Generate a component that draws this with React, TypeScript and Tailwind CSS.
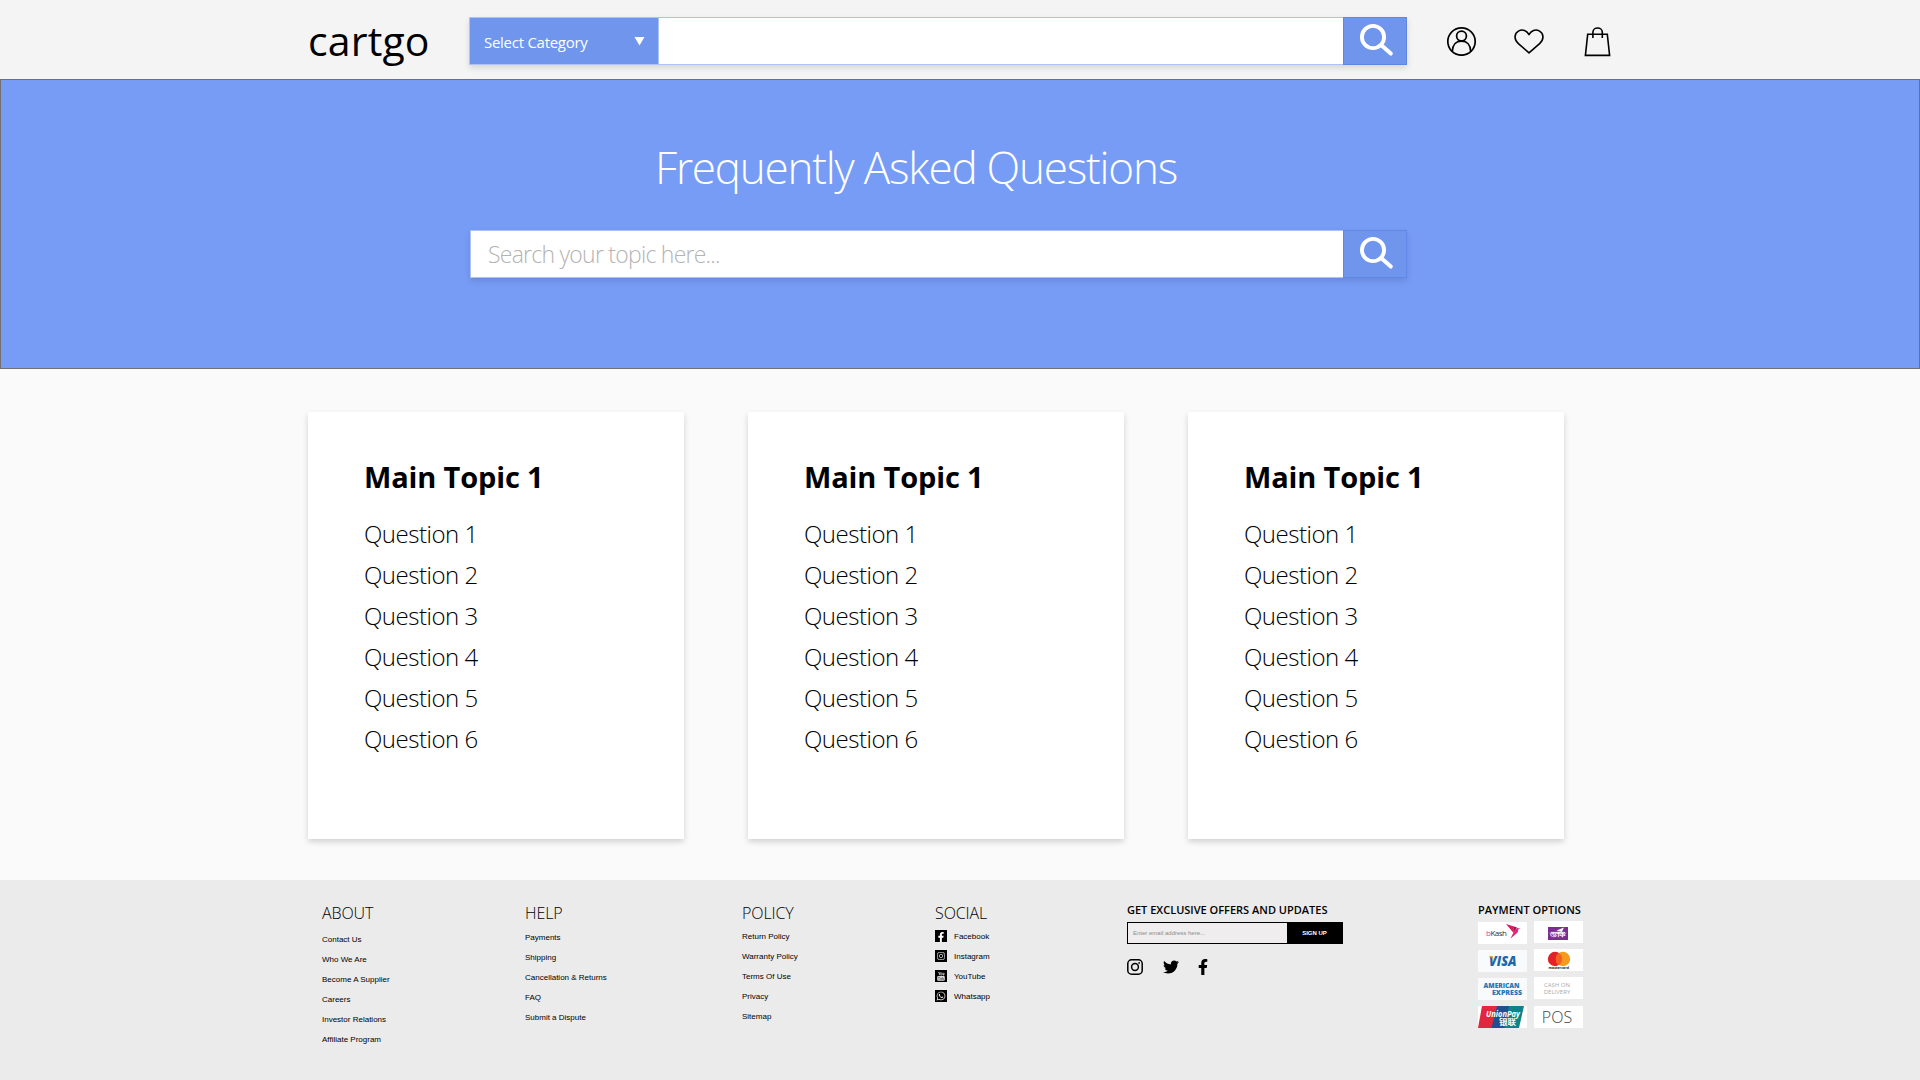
import type { ReactNode } from "react";
import { FaFacebookF, FaTwitter, FaWhatsapp } from "react-icons/fa";

function SearchGlyph() {
  return (
    <svg width="36" height="36" viewBox="0 0 36 36" fill="none" stroke="#fff" strokeLinecap="round">
      <circle cx="15" cy="15" r="11.1" strokeWidth="3.9" />
      <path d="M23.4 23.2 L32.8 31.6" strokeWidth="4" />
    </svg>
  );
}

function UserIcon() {
  return (
    <svg width="30" height="30" viewBox="0 0 30 30" fill="none" stroke="#000" strokeWidth="1.7">
      <circle cx="15.5" cy="15.5" r="13.7" />
      <circle cx="15.5" cy="10.1" r="4.9" />
      <path d="M6.3 25.3 C6.5 19.1 10.1 15.1 15.5 15.1 C20.9 15.1 24.5 19.1 24.7 25.3" />
    </svg>
  );
}

function HeartIcon() {
  return (
    <svg width="30" height="25" viewBox="0 0 30 25" fill="none" stroke="#000" strokeWidth="1.6" strokeLinejoin="round">
      <path d="M15 23.8 L4.4 14.6 C-0.4 10.3 0.3 4.4 4.4 2.1 C8.6 -0.2 13 1.6 15 5.6 C17 1.6 21.4 -0.2 25.6 2.1 C29.7 4.4 30.4 10.3 25.6 14.6 Z" />
    </svg>
  );
}

function BagIcon() {
  return (
    <svg width="27" height="30" viewBox="0 0 27 30" fill="none" stroke="#000" strokeWidth="1.6">
      <path d="M3.7 7.2 H23.3 L25.6 28.4 H1.4 Z" />
      <path d="M8.9 11.1 V5.3 C8.9 -0.4 18.3 -0.4 18.3 5.3 V11.1" />
    </svg>
  );
}

function InstagramGlyph({ size, color }: { size: number; color: string }) {
  return (
    <svg width={size} height={size} viewBox="0 0 16 16" fill="none" stroke={color} strokeWidth="1.5">
      <rect x="0.8" y="0.8" width="14.4" height="14.4" rx="3.8" />
      <circle cx="8" cy="8" r="3.4" />
      <circle cx="12.1" cy="3.9" r="0.9" fill={color} stroke="none" />
    </svg>
  );
}

function YouTubeStacked() {
  return (
    <svg width="8" height="9" viewBox="0 0 8 9" fill="none" stroke="#ddd" strokeWidth="0.8">
      <path d="M1.5 0 L2.4 1.6 L3.3 0 M2.4 1.6 V3.2" />
      <rect x="3.9" y="1.1" width="0.9" height="1.8" />
      <path d="M6 0.8 V3 H7 V0.8" />
      <rect x="0.2" y="4" width="7.6" height="4.8" rx="1" fill="#ddd" stroke="none" />
      <path d="M1.2 5.3 H2.8 M2 5.3 V7.8 M3.6 5.8 V7.5 H4.5 V5.8 M5.6 5 V7.6 H6.6 V6" stroke="#333" strokeWidth="0.5" />
    </svg>
  );
}

function Header() {
  return (
    <header className="flex h-[79px] items-start bg-[#f4f4f4] pl-[308px]">
      <div className="w-[161px] pt-[10px] text-[41px] leading-[60px] tracking-[0.15px]">cartgo</div>
      <div className="mt-[17px] flex h-12 w-[938px] shadow-[0_3px_6px_rgba(0,0,0,0.12)]">
        <div className="flex w-[190px] items-start justify-between border border-[#adc3f3] bg-[#6f95ed] pl-[14px] pr-[13px] text-white">
          <span className="pt-[9px] text-[15px] leading-[30px] tracking-[-0.27px]">Select Category</span>
          <svg className="mt-[19px]" width="11" height="9" viewBox="0 0 11 9" fill="#fff">
            <path d="M0.5 0 H10.5 L5.5 8.5 Z" />
          </svg>
        </div>
        <div className="grow border-y border-[#adc3f3] bg-white" />
        <div className="w-16 border border-[#5f86e0] bg-[#6f95ed] pl-[14px] pt-1">
          <SearchGlyph />
        </div>
      </div>
      <div className="flex">
        <div className="ml-[39px] mt-[26px] w-[30px]"><UserIcon /></div>
        <div className="ml-[38px] mt-[29px] w-[30px]"><HeartIcon /></div>
        <div className="ml-[40px] mt-[27px] w-[27px]"><BagIcon /></div>
      </div>
    </header>
  );
}

function Hero() {
  return (
    <section className="h-[290px] border border-[#707070] bg-[#779cf6] pl-[469px]">
      <h1 className="ml-[185px] pt-[57px] text-[44px] font-light leading-[60px] tracking-[-1.2px] text-white">
        Frequently Asked Questions
      </h1>
      <div className="mt-[33px] flex h-12 w-[937px] shadow-[0_3px_6px_rgba(0,0,0,0.12)]">
        <div className="grow border border-r-0 border-[#adc3f3] bg-white pl-[17px] pt-[7px] text-[23px] font-light leading-[32px] tracking-[-0.75px] text-[#b4b4b4]">
          Search your topic here...
        </div>
        <div className="w-16 border border-[#6088e6] bg-[#6f95ed] pl-[14px] pt-1">
          <SearchGlyph />
        </div>
      </div>
    </section>
  );
}

function TopicCard() {
  return (
    <article className="h-[427px] w-[376px] bg-white pl-[56px] pt-[45px] shadow-[0_3px_6px_rgba(0,0,0,0.16)]">
      <h2 className="text-[29px] font-bold leading-[40px] tracking-[-0.15px]">Main Topic 1</h2>
      <ul className="mt-[16px] text-[24px] font-light leading-[41px] tracking-[-0.47px]">
        {[1, 2, 3, 4, 5, 6].map((n) => (
          <li key={n}>Question {n}</li>
        ))}
      </ul>
    </article>
  );
}

function Column({ title, width, gap, children }: { title: string; width: string; gap: string; children: ReactNode }) {
  return (
    <div className={`${width} pt-px`}>
      <h3 className="text-[16px] font-light leading-5 tracking-[-0.1px]">{title}</h3>
      <ul className={`${gap} font-['Liberation_Sans',sans-serif] text-[8px] leading-5`}>{children}</ul>
    </div>
  );
}

const links = (names: string[]) => names.map((n) => <li key={n}>{n}</li>);

const socials: { name: string; icon: ReactNode; align: string }[] = [
  { name: "Facebook", icon: <FaFacebookF size={10} color="#fff" />, align: "items-end justify-end pr-px" },
  { name: "Instagram", icon: <InstagramGlyph size={8} color="#ddd" />, align: "items-center justify-center" },
  { name: "YouTube", icon: <YouTubeStacked />, align: "items-center justify-center" },
  { name: "Whatsapp", icon: <FaWhatsapp size={10} color="#e5e5e5" />, align: "items-center justify-center" },
];

function Newsletter() {
  return (
    <div className="w-[351px]">
      <h3 className="whitespace-nowrap text-[11px] font-semibold leading-4">GET EXCLUSIVE OFFERS AND UPDATES</h3>
      <div className="mt-1 flex h-[22px] w-[216px] border border-black font-['Liberation_Sans',sans-serif] text-[6px] leading-5">
        <span className="w-[159px] bg-[#efeded] pl-[5px] text-[#8c8c8c]">Enter email address here...</span>
        <span className="grow bg-black text-center font-bold text-white">SIGN UP</span>
      </div>
      <div className="mt-[15px] flex h-4 items-center">
        <InstagramGlyph size={16} color="#000" />
        <FaTwitter className="ml-5" size={16} />
        <FaFacebookF className="ml-4" size={16} />
      </div>
    </div>
  );
}

function Payments() {
  return (
    <div className="w-[106px]">
      <h3 className="whitespace-nowrap text-[11px] font-semibold leading-4">PAYMENT OPTIONS</h3>
      <div className="flex gap-[7px]">
        <div className="flex w-[49px] flex-col gap-[6px] pt-1">
          <div className="flex h-[22px] items-center bg-white pl-2">
            <span className="text-[8px] leading-[12px] tracking-[-0.5px] text-[#333]"><b className="font-normal text-[#e0409a]">b</b>Kash</span>
            <svg className="-mt-1" width="15" height="15" viewBox="0 0 15 15">
              <path d="M0 0 L8 2.4 L7.6 9 Z" fill="#d81b60" />
              <path d="M8 2.4 L11 3.5 L7.6 9 Z" fill="#a3154d" />
              <path d="M11 4 L14.8 4.6 L12.6 5 L11.6 8.4 L4.4 14.8 L7.6 8.2 Z" fill="#e2267a" />
            </svg>
          </div>
          <div className="h-[22px] bg-[#f8fafb]">
            <svg width="49" height="22" viewBox="0 0 49 22">
              <text x="11" y="15.9" textLength="27.5" lengthAdjust="spacingAndGlyphs" fontFamily="Open Sans" fontSize="13.5" fontWeight="800" fontStyle="italic" fill="#1a67a9">VISA</text>
              <path d="M10.3 6 H14.6 L16 10.5 C14.6 8 13 6.8 10.3 6 Z" fill="#f0a930" />
            </svg>
          </div>
          <div className="h-[22px] bg-[#f8fafb]">
            <svg width="49" height="22" viewBox="0 0 49 22" fill="#2178b5" fontFamily="Open Sans" fontSize="7" fontWeight="800">
              <text x="5.5" y="9.8" textLength="36" lengthAdjust="spacingAndGlyphs">AMERICAN</text>
              <text x="14" y="17.2" textLength="30" lengthAdjust="spacingAndGlyphs">EXPRESS</text>
            </svg>
          </div>
          <div className="h-[22px] bg-white">
            <svg width="49" height="22" viewBox="0 0 49 22">
              <path d="M4 0 H20 L15 22 H0 Z" fill="#e0273f" />
              <path d="M19 0 H33 L28 22 H13.5 Z" fill="#1f4f8f" />
              <path d="M31 0 H46 L41 22 H26 Z" fill="#0d8288" />
              <g fill="#fff" fontWeight="700">
                <text x="8" y="11" textLength="34" lengthAdjust="spacingAndGlyphs" fontFamily="Open Sans" fontStyle="italic" fontSize="9">UnionPay</text>
                <text x="21" y="18.6" textLength="17" lengthAdjust="spacingAndGlyphs" fontFamily="Noto Sans CJK SC" fontSize="7.5">银联</text>
              </g>
            </svg>
          </div>
        </div>
        <div className="flex w-[49px] flex-col pt-[3px]">
          <div className="h-[22px] bg-white">
            <svg width="49" height="22" viewBox="0 0 49 22">
              <rect x="14" y="6" width="20" height="13" fill="#7b2d90" />
              <path d="M22.5 9.6 L30 6.4 L27.8 11 Z" fill="#fff" />
              <path d="M17 11.4 H31" stroke="#fff" strokeWidth="0.9" />
              <text x="16" y="16.2" textLength="16" lengthAdjust="spacingAndGlyphs" fontFamily="Open Sans" fontSize="6.5" fontWeight="700" fill="#fff">ডাক</text>
            </svg>
          </div>
          <div className="mt-[6px] flex h-[22px] justify-center bg-white">
            <svg width="24" height="22" viewBox="0 0 24 22">
              <circle cx="8" cy="10" r="7.2" fill="#e02425" />
              <circle cx="16" cy="10" r="7.2" fill="#f49a1c" />
              <path d="M12 4 A7.2 7.2 0 0 1 12 16 A7.2 7.2 0 0 1 12 4 Z" fill="#f2611f" />
              <text x="1.5" y="20.4" textLength="20.5" lengthAdjust="spacingAndGlyphs" fontFamily="Open Sans" fontSize="4" fontWeight="700" fill="#222">mastercard</text>
            </svg>
          </div>
          <div className="mt-[6px] h-[22px] bg-white pr-[3px] pt-[5px] text-center text-[6px] leading-[7px] text-[#aaa]">
            CASH ON<br />DELIVERY
          </div>
          <div className="mt-[7px] h-[22px] bg-white pr-[3px] text-center text-[16px] font-light leading-[23px] text-[#444]">POS</div>
        </div>
      </div>
    </div>
  );
}

export default function App() {
  return (
    <div className="h-[1080px] w-[1920px] overflow-hidden bg-[#fafafa] font-['Open_Sans',sans-serif] text-black">
      <Header />
      <Hero />
      <main className="flex h-[511px] gap-16 pl-[308px] pt-[43px]">
        <TopicCard />
        <TopicCard />
        <TopicCard />
      </main>
      <footer className="flex h-[200px] bg-[#ebebeb] pl-[322px] pt-[22px]">
        <Column title="ABOUT" width="w-[203px]" gap="mt-[7px]">
          {links(["Contact Us", "Who We Are", "Become A Supplier", "Careers", "Investor Relations", "Affiliate Program"])}
        </Column>
        <Column title="HELP" width="w-[217px]" gap="mt-[5px]">
          {links(["Payments", "Shipping", "Cancellation & Returns", "FAQ", "Submit a Dispute"])}
        </Column>
        <Column title="POLICY" width="w-[193px]" gap="mt-[4px]">
          {links(["Return Policy", "Warranty Policy", "Terms Of Use", "Privacy", "Sitemap"])}
        </Column>
        <Column title="SOCIAL" width="w-[192px]" gap="mt-[4px]">
          {socials.map((s) => (
            <li key={s.name} className="flex items-center gap-[7px]">
              <span className={`mb-[2px] flex size-3 bg-black ${s.align}`}>{s.icon}</span>
              {s.name}
            </li>
          ))}
        </Column>
        <Newsletter />
        <Payments />
      </footer>
    </div>
  );
}
